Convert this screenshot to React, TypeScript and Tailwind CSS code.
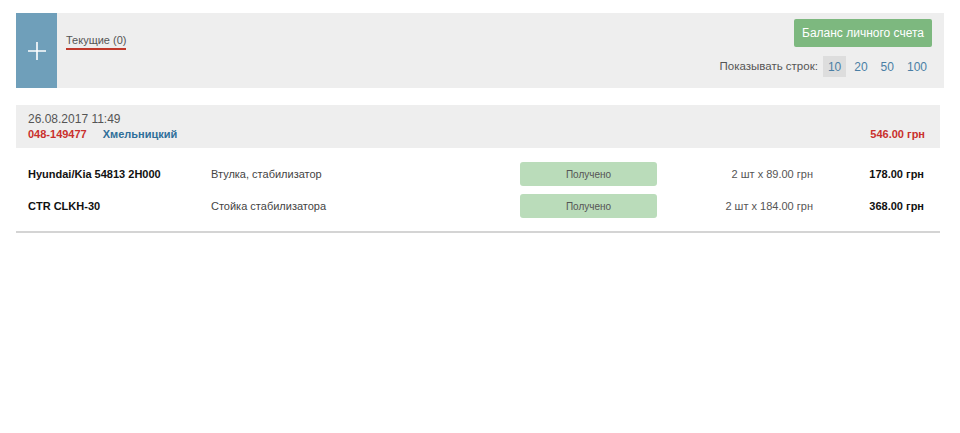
import React from "react";

const items = [
  { code: "Hyundai/Kia 54813 2H000", name: "Втулка, стабилизатор", qty: "2 шт x 89.00 грн", total: "178.00 грн" },
  { code: "CTR CLKH-30", name: "Стойка стабилизатора", qty: "2 шт x 184.00 грн", total: "368.00 грн" },
];

const pageSizes = ["10", "20", "50", "100"];

export default function App() {
  return (
    <div className="min-h-[433px] bg-white pt-[13px] text-[#333]" style={{ fontFamily: '"Liberation Sans", Arial, sans-serif' }}>
      {/* tabs bar */}
      <div className="ml-4 mr-4 flex h-[75px] bg-[#eeeeee]">
        <button className="flex w-[41px] items-center justify-center bg-[#6f9fba]">
          <svg width="20" height="20" viewBox="0 0 20 20">
            <path d="M10 1v18M1 10h18" stroke="#fff" strokeWidth="1.6" />
          </svg>
        </button>
        <div className="flex-1 pl-[9px] pt-[14px]">
          <span className="inline-block border-b-[2px] border-[#c0392b] pb-[1px] text-[11px] leading-[13px] text-[#555]">Текущие (0)</span>
        </div>
        <div className="flex flex-col items-end pr-[12px] pt-[6px]">
          <button className="h-[28px] w-[138px] rounded-[2px] bg-[#7db87f] text-[12px] text-white">Баланс личного счета</button>
          <div className="mt-[9px] flex items-center gap-[3px] text-[12px]">
            <span className="mr-[2px] text-[11.5px] text-[#555]">Показывать строк:</span>
            {pageSizes.map((n, i) => (
              <span
                key={n}
                className={
                  i === 0
                    ? "flex h-[21px] items-center justify-center bg-[#dddddd] px-[5px] text-[#4a7fa5]"
                    : "flex h-[21px] items-center justify-center px-[5px] text-[#4a7fa5]"
                }
              >
                {n}
              </span>
            ))}
          </div>
        </div>
      </div>

      {/* order */}
      <div className="ml-4 mr-[20px] mt-[17px] border-b-2 border-[#d4d4d4]">
        <div className="flex h-[43px] items-end justify-between bg-[#eeeeee] px-3 pb-[6px]">
          <div>
            <div className="text-[12px] leading-[15px] text-[#555]">26.08.2017 11:49</div>
            <div className="flex text-[11px] font-bold leading-[15px]">
              <span className="text-[#c9302c]">048-149477</span>
              <span className="ml-[16px] text-[#2f6f9a]">Хмельницкий</span>
            </div>
          </div>
          <div className="pr-[3px] text-[11px] font-bold leading-[15px] text-[#c9302c]">546.00 грн</div>
        </div>
        <div className="pb-[13px] pt-[14px]">
          {items.map((it) => (
            <div key={it.code} className="mb-[8px] flex h-[24px] items-center text-[11px] last:mb-0">
              <div className="w-[195px] pl-3 font-bold text-[#111]">{it.code}</div>
              <div className="w-[309px] text-[#444]">{it.name}</div>
              <div className="flex h-[24px] w-[137px] items-center justify-center rounded-[3px] bg-[#badcba] text-[10px] text-[#555]">Получено</div>
              <div className="w-[156px] text-right text-[#555]">{it.qty}</div>
              <div className="w-[111px] text-right font-bold text-[#111]">{it.total}</div>
            </div>
          ))}
        </div>
      </div>
    </div>
  );
}
